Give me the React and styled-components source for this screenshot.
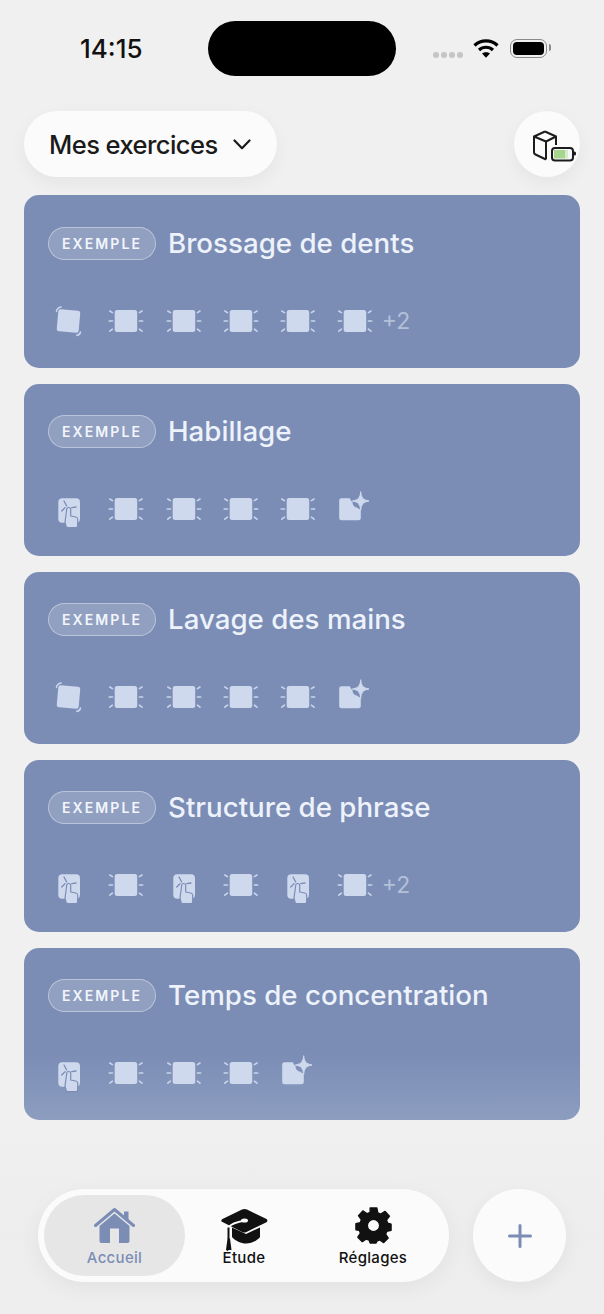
import React from 'react';
import styled, { createGlobalStyle } from 'styled-components';

const GlobalStyle = createGlobalStyle`
  html, body {
    margin: 0;
    padding: 0;
    background: #f0f0f0;
  }
  * {
    box-sizing: border-box;
  }
`;

const Page = styled.div`
  width: 604px;
  height: 1314px;
  overflow: hidden;
  display: flex;
  flex-direction: column;
  font-family: Inter, "Noto Sans", sans-serif;
  background: linear-gradient(#f0f0f0 0, #f0f0f0 1120px, #ededed 1230px, #eeeeee 1314px);
`;

const StatusBar = styled.div`
  display: grid;
  grid-template-columns: 208px 188px 1fr;
  padding-top: 21px;
  height: 76px;
`;

const Time = styled.div`
  padding: 12px 0 0 80px;
  font-size: 26px;
  line-height: 32px;
  font-weight: 500;
  color: #111;
`;

const Island = styled.div`
  height: 55px;
  border-radius: 28px;
  background: #000;
`;

const StatusIcons = styled.div`
  display: flex;
  align-items: flex-start;
  padding: 18px 0 0 37px;
`;

const Dots = styled.div`
  display: flex;
  gap: 2.5px;
  margin: 13px 10px 0 0;
`;

const Dot = styled.span`
  width: 5.5px;
  height: 5.5px;
  border-radius: 50%;
  background: #c6c6c6;
`;

const Battery = styled.div`
  width: 37px;
  height: 19px;
  margin-left: 11px;
  padding: 2px;
  border: 1.5px solid #8a8a8a;
  border-radius: 7px;
  position: relative;
  &::after {
    content: '';
    position: absolute;
    top: 4px;
    right: -5px;
    width: 2px;
    height: 7px;
    border-radius: 0 2px 2px 0;
    background: #8a8a8a;
  }
`;

const BatteryLevel = styled.div`
  height: 100%;
  border-radius: 4px;
  background: #000;
`;

const Header = styled.div`
  display: flex;
  justify-content: space-between;
  padding: 35px 24px 0;
`;

const ListPicker = styled.div`
  width: 253px;
  height: 66px;
  border-radius: 33px;
  background: #fbfbfb;
  box-shadow: 0 6px 18px rgba(0, 0, 0, 0.05);
  display: flex;
  align-items: center;
  gap: 15px;
  padding-left: 25px;
  font-size: 25.5px;
  letter-spacing: -0.55px;
  font-weight: 500;
  color: #1a1a1a;
`;

const RoundButton = styled.div`
  width: ${p => p.$size}px;
  height: ${p => p.$size}px;
  border-radius: 50%;
  background: #fbfbfb;
  box-shadow: 0 6px 18px rgba(0, 0, 0, 0.05);
  display: flex;
  align-items: center;
  justify-content: center;
  flex-shrink: 0;
`;

const CardList = styled.div`
  display: flex;
  flex-direction: column;
  gap: 15.5px;
  padding: 18.5px 24px 0;
`;

const Card = styled.div`
  height: 172.5px;
  border-radius: 15px;
  padding: 31px 24px 0;
  background: ${p => p.$fade
    ? 'linear-gradient(#7b8db5 0, #7b8db5 105px, #8c9dc0 172px)'
    : '#7b8db5'};
  &:first-child {
    height: 173px;
    margin-top: -0.5px;
    padding-top: 31.5px;
  }
`;

const CardHeader = styled.div`
  display: flex;
  align-items: center;
  gap: 12px;
`;

const Badge = styled.div`
  width: 108px;
  height: 33px;
  border-radius: 17px;
  border: 1px solid rgba(255, 255, 255, 0.38);
  background: rgba(255, 255, 255, 0.17);
  display: flex;
  align-items: center;
  justify-content: center;
  font-size: 14px;
  font-weight: 600;
  letter-spacing: 2.1px;
  color: #f2f5fb;
`;

const CardTitle = styled.div`
  font-size: 27.7px;
  line-height: 33px;
  font-weight: 500;
  color: #edf2fb;
`;

const StepRow = styled.div`
  display: flex;
  align-items: center;
  gap: 17.3px;
  margin-top: 41px;
`;

const StepSlot = styled.svg`
  width: 40px;
  height: 40px;
  display: block;
  flex-shrink: 0;
  overflow: visible;
`;

const MoreCount = styled.div`
  margin-left: -10px;
  font-size: 23px;
  color: #b3c0da;
`;

const BottomBar = styled.div`
  margin-top: auto;
  display: flex;
  align-items: center;
  gap: 24px;
  padding: 0 38px 32px;
`;

const TabBar = styled.div`
  width: 411px;
  height: 93px;
  border-radius: 47px;
  background: #fbfbfb;
  box-shadow: 0 6px 22px rgba(0, 0, 0, 0.05);
  padding: 6px;
  display: flex;
`;

const Tab = styled.div`
  width: ${p => p.$width}px;
  height: 81px;
  border-radius: 41px;
  background: ${p => (p.$active ? '#e6e6e6' : 'transparent')};
  color: ${p => (p.$active ? '#7b8db5' : '#111')};
  display: flex;
  flex-direction: column;
  align-items: center;
  font-size: 15px;
  font-weight: 500;
  letter-spacing: 0.3px;
`;

const TabIcon = styled.div`
  height: 54px;
  padding-top: ${p => p.$top}px;
`;

const TabLabel = styled.div`
  line-height: 18px;
`;

const CARD = '#7b8db5';
const ICON = '#cfd9ee';
const RAY = '#c9d5ec';

const GlowStep = () => (
  <StepSlot viewBox="0 0 40 40">
    <rect x="9.700" y="9" width="22.500" height="22" rx="2.500" fill={ICON} />
    <g stroke={RAY} strokeWidth="1.600" strokeLinecap="round" fill="none">
      <path d="M4.200 20H7.500M34.400 20H37.700M4.800 10l2.600 1.600M37 10l-2.600 1.600M4.800 30.200l2.600-2M37 30.200l-2.600-2" />
    </g>
  </StepSlot>
);

const TurnStep = () => (
  <StepSlot viewBox="0 0 40 40">
    <rect x="9.500" y="9" width="22" height="22" rx="2.500" fill={ICON} transform="rotate(5 20 20)" />
    <g stroke={RAY} strokeWidth="1.600" strokeLinecap="round" fill="none">
      <path d="M8.500 10.500C8.800 7.800 10.300 6.400 13.100 6M32.500 31C32.100 33 30.900 34 28.900 34.400" />
    </g>
  </StepSlot>
);

const TapStep = () => (
  <StepSlot viewBox="0 0 40 40">
    <rect x="10.300" y="9.300" width="21.700" height="24.500" rx="4" fill={ICON} />
    <path
      d="M18.700 20.500a2 2 0 0 1 4 0V27l5 1c1.200.3 2 1 2 2.300v6.400a2 2 0 0 1-2 2H20a2 2 0 0 1-2-1.500L17 33z"
      fill={ICON}
      stroke={CARD}
      strokeWidth="1.200"
      strokeLinejoin="round"
    />
    <g stroke={CARD} strokeWidth="1.300" strokeLinecap="round" fill="none">
      <path d="M16 12l2.700 5M13.700 22l3.300-3.300M23.700 18.700l4.300-.7" />
    </g>
  </StepSlot>
);

const AiStep = () => (
  <StepSlot viewBox="0 0 40 40">
    <path d="M7.500 9.300H16C16.300 11 17.500 12.500 18.500 13C18.500 16 20.500 18.500 23 18.500C24 19.500 25.500 20.300 26.800 20.300V29a2.300 2.300 0 0 1-2.300 2.300H7.500A2.300 2.300 0 0 1 5.200 29V11.600a2.300 2.300 0 0 1 2.300-2.300z" fill={ICON} />
    <path d="M26.700 2.700C27.300 8.600 28.800 10.900 35 12C28.800 13.100 27.300 15.400 26.700 21.300C26.100 15.400 24.600 13.100 18.400 12C24.600 10.900 26.100 8.600 26.700 2.700z" fill={ICON} stroke={ICON} strokeWidth="1" strokeLinejoin="round" />
  </StepSlot>
);

const STEP_ICONS = { glow: GlowStep, turn: TurnStep, tap: TapStep, ai: AiStep };

const EXERCISES = [
  { title: 'Brossage de dents', steps: ['turn', 'glow', 'glow', 'glow', 'glow', 'glow'], more: 2 },
  { title: 'Habillage', steps: ['tap', 'glow', 'glow', 'glow', 'glow', 'ai'] },
  { title: 'Lavage des mains', steps: ['turn', 'glow', 'glow', 'glow', 'glow', 'ai'] },
  { title: 'Structure de phrase', steps: ['tap', 'glow', 'tap', 'glow', 'tap', 'glow'], more: 2 },
  { title: 'Temps de concentration', steps: ['tap', 'glow', 'glow', 'glow', 'ai'], fade: true },
];

const Wifi = () => (
  <svg width="26" height="20" viewBox="0 0 26 20" style={{ marginTop: -1 }}>
    <g fill="none" stroke="#000" strokeWidth="3.200">
      <path d="M1.500 7.500C8 1.300 18 1.300 24.500 7.500" />
      <path d="M6 12C10 8.300 16 8.300 20 12" />
    </g>
    <path d="M9 15.500C11.300 13.700 14.700 13.700 17 15.500L13 19.800z" fill="#000" />
  </svg>
);

const Chevron = () => (
  <svg width="18" height="11" viewBox="0 0 18 11">
    <path d="M1.500 1.500L9 9.200L16.500 1.500" fill="none" stroke="#1a1a1a" strokeWidth="2.200" strokeLinecap="round" strokeLinejoin="round" />
  </svg>
);

const CubeBattery = () => (
  <svg width="46" height="34" viewBox="0 0 46 34" style={{ marginLeft: 14, marginTop: 4 }}>
    <g fill="none" stroke="#1c1c1c" strokeWidth="2" strokeLinejoin="round">
      <path d="M14 2.500L25 7.500V16M14 2.500L3 7.500V23.500C3 24.500 3.500 25 4.500 25.500L15 30.500M3 7.500L15 12.500V30.500M15 12.500L25 7.500" />
    </g>
    <rect x="21" y="19" width="21" height="12.500" rx="3" fill="#f7f7f7" stroke="#1c1c1c" strokeWidth="2" />
    <rect x="23" y="21" width="11" height="8.500" fill="#a6d68d" />
    <rect x="34" y="21" width="3" height="8.500" fill="#d5ebc9" />
    <path d="M42 22.500h1.500a1.500 1.500 0 0 1 1.500 1.500v1a1.500 1.500 0 0 1-1.500 1.500H42" fill="#1c1c1c" />
  </svg>
);

const HomeIcon = () => (
  <svg width="41" height="37" viewBox="0 0 41 37" style={{ display: 'block' }}>
    <path d="M1.500 18.500L20.500 2.500L39.500 18.500" fill="none" stroke="#7b8db5" strokeWidth="3" strokeLinecap="round" strokeLinejoin="round" />
    <path d="M30 4.500h4.500V14L30 10z" fill="#7b8db5" />
    <path fillRule="evenodd" d="M20.500 6.500L35.500 19V34a2 2 0 0 1-2 2H7.500a2 2 0 0 1-2-2V19zM16 21.500V36H25V21.500z" fill="#7b8db5" />
  </svg>
);

const CapIcon = () => (
  <svg width="47" height="44" viewBox="0 0 47 44" style={{ display: 'block' }}>
    <path d="M11 19.500V29c3.500 4 9 6.500 14 6.500s11-2.500 14-6.500V19.500L25 26z" fill="#111" />
    <path d="M.500 13.500C0 12.500.500 11.500 1.500 11L21 1.500c1.500-.800 3.500-.800 5 0L45.500 11c1.200.700 1.200 2.500 0 3.200L25.500 24c-1.500.700-3 .700-4.500 0z" fill="#111" />
    <path d="M24 12.500C16 14 9.500 16.500 8 19" fill="none" stroke="#fbfbfb" strokeWidth="2" strokeLinecap="round" />
    <ellipse cx="23.500" cy="12.500" rx="3.500" ry="2" fill="#fbfbfb" />
    <path d="M7.500 19.500V31" stroke="#111" strokeWidth="2" />
    <path d="M6.500 30.500h2.500L10.500 42H5z" fill="#111" />
  </svg>
);

const GearIcon = () => (
  <svg width="37" height="37" viewBox="-1 -1 39 39" style={{ display: 'block' }}>
    <path
      fillRule="evenodd"
      fill="#111"
      stroke="#111"
      strokeWidth="1.500"
      strokeLinejoin="round"
      d="M15 0h7l1 5.200 3.200 1.400 4.500-3 4.600 5-3.100 4.300 1.300 3.200L37 17v6.500l-4.500 1-1.300 3.100 2.800 4.200-4.700 4.700-4.200-2.800-3 1.200L21 37h-6l-1.100-3.100-3-1.200-4.200 2.800L2 30.800l2.800-4.200-1.300-3.100L0 23v-6.500l4.500-.9 1.300-3.200L2.700 8.100l4.600-5 4.500 3L15 4.700zM18.500 12a6.500 6.500 0 1 0 0 13 6.500 6.500 0 0 0 0-13z"
    />
  </svg>
);

const PlusIcon = () => (
  <svg width="24" height="24" viewBox="0 0 24 24">
    <path d="M12 1.500V22.500M1.500 12H22.500" stroke="#7b8db5" strokeWidth="3" strokeLinecap="round" />
  </svg>
);

const App = () => {
  return (
    <Page>
      <GlobalStyle />
      <StatusBar>
        <Time>14:15</Time>
        <Island />
        <StatusIcons>
          <Dots>
            <Dot />
            <Dot />
            <Dot />
            <Dot />
          </Dots>
          <Wifi />
          <Battery>
            <BatteryLevel />
          </Battery>
        </StatusIcons>
      </StatusBar>

      <Header>
        <ListPicker>
          Mes exercices
          <Chevron />
        </ListPicker>
        <RoundButton $size={66}>
          <CubeBattery />
        </RoundButton>
      </Header>

      <CardList>
        {EXERCISES.map(exercise => (
          <Card key={exercise.title} $fade={exercise.fade}>
            <CardHeader>
              <Badge>EXEMPLE</Badge>
              <CardTitle>{exercise.title}</CardTitle>
            </CardHeader>
            <StepRow>
              {exercise.steps.map((step, i) => {
                const Icon = STEP_ICONS[step];
                return <Icon key={i} />;
              })}
              {exercise.more && <MoreCount>+{exercise.more}</MoreCount>}
            </StepRow>
          </Card>
        ))}
      </CardList>

      <BottomBar>
        <TabBar>
          <Tab $active $width={141}>
            <TabIcon $top={12}><HomeIcon /></TabIcon>
            <TabLabel>Accueil</TabLabel>
          </Tab>
          <Tab $width={118}>
            <TabIcon $top={13}><CapIcon /></TabIcon>
            <TabLabel>Étude</TabLabel>
          </Tab>
          <Tab $width={140}>
            <TabIcon $top={12}><GearIcon /></TabIcon>
            <TabLabel>Réglages</TabLabel>
          </Tab>
        </TabBar>
        <RoundButton $size={93}>
          <PlusIcon />
        </RoundButton>
      </BottomBar>
    </Page>
  );
};

export default App;
